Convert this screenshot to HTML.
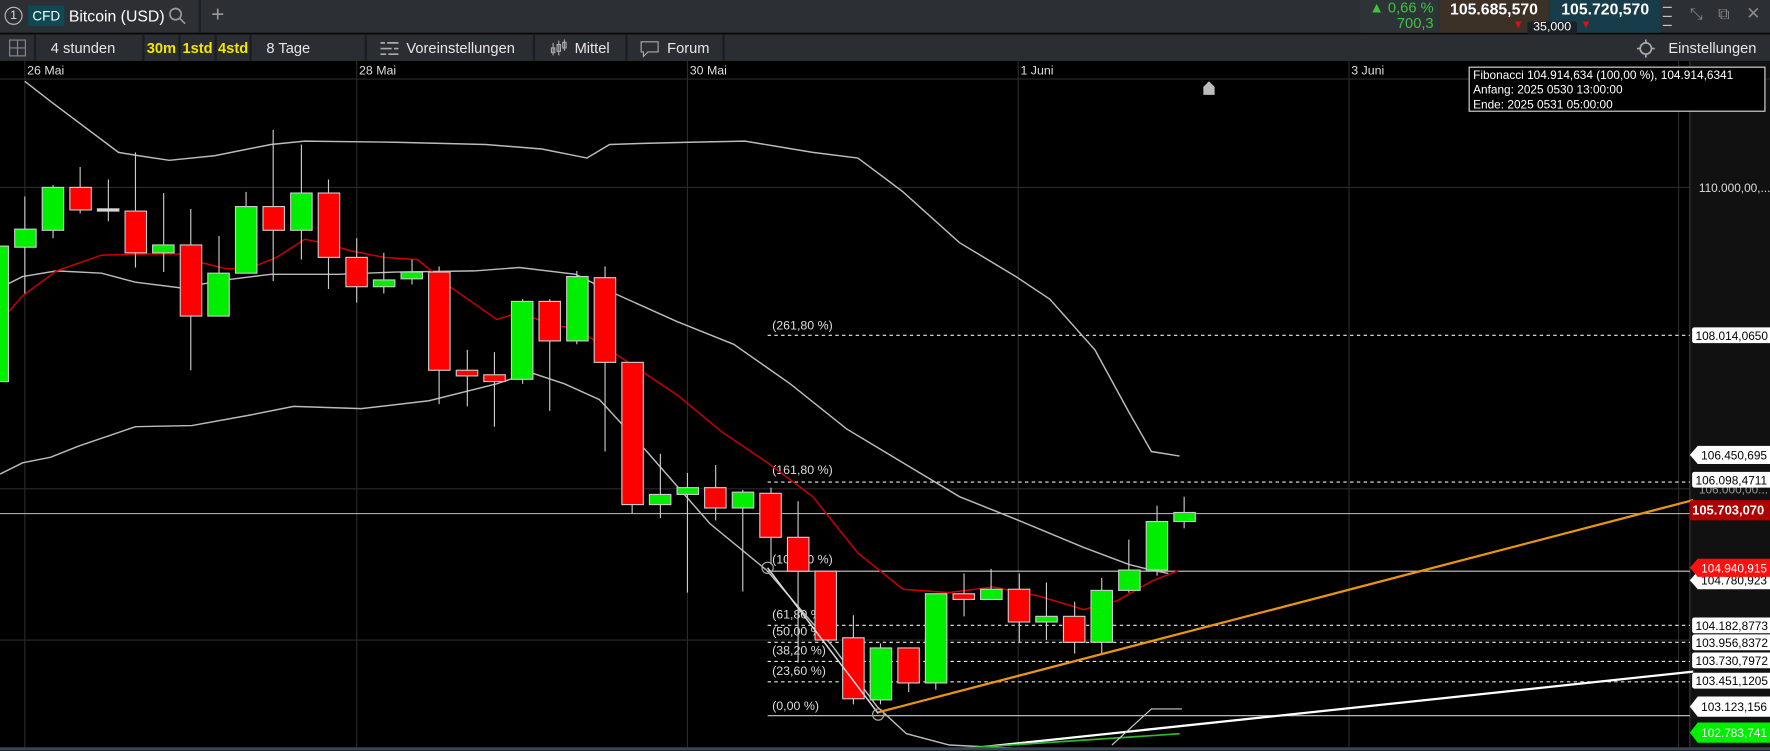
<!DOCTYPE html>
<html><head><meta charset="utf-8"><style>
html,body{margin:0;padding:0;background:#000;overflow:hidden;width:1770px;height:751px}
#w{position:absolute;left:0;top:0;width:1568px;height:665px;transform:scale(1.12883);transform-origin:0 0;font-family:"Liberation Sans",sans-serif;background:#000}
.top{position:absolute;left:0;top:0;width:1568px;height:29px;background:#2c3035}
.tb{position:absolute;left:0;top:30px;width:1568px;height:23px;background:#2a2e33;border-top:1px solid #1a1c1f}
.it{position:absolute;top:0;height:23px;line-height:23px;color:#e6e6e6;font-size:13px;border-right:2px solid #1b1d20;box-sizing:border-box}
.y{color:#f2e600;font-weight:bold;text-align:center}
svg{position:absolute;left:0;top:0}
</style></head><body><div id="w">
<div class="top">
 <div style="position:absolute;left:4px;top:6px;width:14px;height:14px;border:1px solid #bbb;border-radius:50%;color:#ddd;font-size:11px;text-align:center;line-height:14px">1</div>
 <div style="position:absolute;left:25px;top:5px;width:32px;height:18px;background:#0d4a55;color:#fff;font-size:12px;text-align:center;line-height:18px">CFD</div>
 <div style="position:absolute;left:61px;top:5px;color:#fff;font-size:14px;line-height:18px">Bitcoin (USD)</div>
 <svg style="left:149px;top:6px" width="16" height="16"><circle cx="6.5" cy="6.5" r="5" stroke="#999" stroke-width="1.5" fill="none"/><line x1="10" y1="10" x2="15" y2="15" stroke="#999" stroke-width="1.5"/></svg>
 <div style="position:absolute;left:176px;top:0;width:2px;height:29px;background:#1e2023"></div>
 <div style="position:absolute;left:187px;top:2px;color:#999;font-size:20px">+</div>
 <div style="position:absolute;left:1205px;top:0;width:69px;height:29px;background:#2e3337;color:#3ec43e;font-size:13px;text-align:right;line-height:14px;padding-right:4px;box-sizing:border-box">▲ 0,66 %<br>700,3</div>
 <div style="position:absolute;left:1275px;top:0;width:97px;height:29px;background:#3b3126;color:#fff;font-weight:bold;font-size:14px;text-align:center;line-height:16px">105.685,570</div>
 <div style="position:absolute;left:1373px;top:0;width:98px;height:29px;background:#163d49;color:#fff;font-weight:bold;font-size:14px;text-align:center;line-height:16px">105.720,570</div>
 <div style="position:absolute;left:1340px;top:17px;color:#e01010;font-size:10px">▼</div>
 <div style="position:absolute;left:1400px;top:17px;color:#e01010;font-size:10px">▼</div>
 <div style="position:absolute;left:1353px;top:19px;width:44px;height:11px;background:#1b2025;color:#fff;font-size:11px;text-align:center;line-height:11px;border-radius:2px">35,000</div>
 <div style="position:absolute;left:1473px;top:6px;width:8px;height:1px;background:#ccc;box-shadow:0 8px 0 #ccc,0 16px 0 #ccc"></div>
 <div style="position:absolute;left:1497px;top:4px;color:#888;font-size:14px">⤡</div>
 <div style="position:absolute;left:1522px;top:4px;color:#888;font-size:14px">⧉</div>
 <div style="position:absolute;left:1547px;top:3px;color:#888;font-size:15px">✕</div>
</div>
<div class="tb">
 <div class="it" style="left:0;width:32px"><svg style="left:8px;top:4px" width="15" height="15"><rect x="0.5" y="0.5" width="14" height="14" fill="none" stroke="#888"/><line x1="7.5" y1="0" x2="7.5" y2="15" stroke="#888"/><line x1="0" y1="7.5" x2="15" y2="7.5" stroke="#888"/></svg></div>
 <div class="it" style="left:32px;width:96px;padding-left:13px">4 stunden</div>
 <div class="it y" style="left:128px;width:32px">30m</div>
 <div class="it y" style="left:160px;width:32px">1std</div>
 <div class="it y" style="left:192px;width:31px">4std</div>
 <div class="it" style="left:223px;width:102px;padding-left:13px">8 Tage</div>
 <div class="it" style="left:325px;width:149px;padding-left:35px">Voreinstellungen<svg style="left:12px;top:5px" width="16" height="14"><g stroke="#aaa" stroke-width="1.5"><line x1="0" y1="2" x2="16" y2="2"/><line x1="0" y1="7" x2="16" y2="7"/><line x1="0" y1="12" x2="16" y2="12"/></g><g fill="#2a2e33"><rect x="4" y="0" width="2" height="4"/><rect x="10" y="5" width="2" height="4"/><rect x="5" y="10" width="2" height="4"/></g></svg></div>
 <div class="it" style="left:474px;width:82px;padding-left:35px">Mittel<svg style="left:13px;top:4px" width="16" height="15"><g stroke="#aaa" fill="none"><line x1="3" y1="3" x2="3" y2="14"/><rect x="1.5" y="7.5" width="3" height="4"/><line x1="8" y1="1" x2="8" y2="14"/><rect x="6.5" y="4.5" width="3" height="6"/><line x1="13" y1="0" x2="13" y2="10"/><rect x="11.5" y="2.5" width="3" height="5"/></g></svg></div>
 <div class="it" style="left:556px;width:86px;padding-left:35px">Forum<svg style="left:11px;top:5px" width="17" height="15"><path d="M1 1H16V10H7L3 14V10H1Z" fill="none" stroke="#aaa"/></svg></div>
 <div style="position:absolute;right:12px;top:0;line-height:23px;color:#e6e6e6;font-size:13px">Einstellungen</div>
 <svg style="left:1450px;top:4px" width="16" height="16"><circle cx="8" cy="8" r="5" fill="none" stroke="#aaa" stroke-width="1.5"/><g stroke="#aaa" stroke-width="1.5"><line x1="8" y1="0" x2="8" y2="3"/><line x1="8" y1="13" x2="8" y2="16"/><line x1="0" y1="8" x2="3" y2="8"/><line x1="13" y1="8" x2="16" y2="8"/></g></svg>
</div>
<svg width="1568" height="665" style="top:0" font-family="Liberation Sans, sans-serif">
<g transform="translate(0,0)">
<rect x="1497" y="54" width="71" height="611" fill="#111"/>
<line x1="1497" y1="54" x2="1497" y2="665" stroke="#3a3a3a"/>
<g stroke="#2a2a2a" stroke-width="1">
<line x1="22" y1="54" x2="22" y2="662"/><line x1="316" y1="54" x2="316" y2="662"/><line x1="609" y1="54" x2="609" y2="662"/><line x1="902" y1="54" x2="902" y2="662"/><line x1="1195" y1="54" x2="1195" y2="662"/><line x1="1487" y1="54" x2="1487" y2="662"/>
<line x1="0" y1="166" x2="1497" y2="166"/><line x1="0" y1="433" x2="1497" y2="433"/><line x1="0" y1="567" x2="1497" y2="567"/>
<line x1="0" y1="70" x2="1568" y2="70"/>
</g>
<g fill="#ddd" font-size="11"><text x="24" y="66">26 Mai</text><text x="318" y="66">28 Mai</text><text x="611" y="66">30 Mai</text><text x="904" y="66">1 Juni</text><text x="1197" y="66">3 Juni</text></g>
<path d="M1066 84V77L1071 72L1076 77V84Z" fill="#bbb"/>
<!-- fib levels -->
<g stroke="#eee" stroke-width="1" stroke-dasharray="3,3">
<line x1="680" y1="297" x2="1497" y2="297"/><line x1="680" y1="427" x2="1497" y2="427"/><line x1="680" y1="554" x2="1497" y2="554"/><line x1="680" y1="569" x2="1497" y2="569"/><line x1="680" y1="586" x2="1497" y2="586"/><line x1="680" y1="604" x2="1497" y2="604"/>
</g>
<line x1="680" y1="506" x2="1497" y2="506" stroke="#ccc"/>
<line x1="680" y1="634" x2="1497" y2="634" stroke="#ccc"/>
<line x1="0" y1="455" x2="1497" y2="455" stroke="#aaa"/>
<g fill="#ddd" font-size="11"><text x="684" y="292">(261,80 %)</text><text x="684" y="420">(161,80 %)</text><text x="684" y="499">(100,00 %)</text><text x="684" y="548">(61,80 %)</text><text x="684" y="563">(50,00 %)</text><text x="684" y="580">(38,20 %)</text><text x="684" y="598">(23,60 %)</text><text x="684" y="629">(0,00 %)</text></g>
<!-- bands -->
<g fill="none" stroke-width="1.3">
<polyline stroke="#bbb" points="22,72 45,90 105,135 123,138 150,142 190,138 240,128 270,125 350,126 430,128 480,132 520,140 540,128 570,127 610,126 660,125 690,130 720,135 760,140 800,170 850,215 900,245 930,265 970,310 1000,365 1020,400 1045,404"/>
<polyline stroke="#bbb" points="0,420 20,410 45,405 70,395 120,378 170,377 220,368 260,360 320,362 380,355 440,340 470,330 500,340 531,354 566,392 629,464 679,505 738,573 777,626 803,650 841,660 900,663"/>
<polyline stroke="#bbb" points="0,255 20,245 50,240 90,242 120,250 160,255 200,248 240,243 300,243 350,241 420,240 460,237 510,243 540,258 600,285 650,305 700,340 750,380 800,410 850,440 900,460 960,485 1000,500 1020,505 1035,508"/>
<polyline stroke="#c00" points="0,285 20,262 50,240 90,226 130,225 160,225 180,233 200,238 220,238 245,228 270,212 290,216 310,222 340,228 370,230 400,255 440,283 460,277 490,288 510,291 540,310 570,330 600,350 640,383 680,410 720,440 760,490 800,522 840,525 880,520 920,528 960,540 990,532 1020,515 1045,505"/>
</g>
<!-- candles -->
<g stroke="#ccc" stroke-width="1">
<line x1="-2" y1="210" x2="-2" y2="340"/><rect x="-11.5" y="218" width="19" height="120" fill="#00ee00"/>
<line x1="22" y1="174" x2="22" y2="260"/><rect x="13" y="203" width="19" height="16" fill="#00ee00"/>
<line x1="47" y1="164" x2="47" y2="211"/><rect x="37.4" y="166" width="19" height="38" fill="#00ee00"/>
<line x1="71" y1="148" x2="71" y2="189"/><rect x="61.9" y="166" width="19" height="20" fill="#f00"/>
<line x1="96" y1="159" x2="96" y2="196"/><rect x="86.3" y="185" width="19" height="2" fill="#ddd"/>
<line x1="120" y1="135" x2="120" y2="237"/><rect x="110.8" y="187" width="19" height="37" fill="#f00"/>
<line x1="145" y1="171" x2="145" y2="241"/><rect x="135.2" y="217" width="19" height="7" fill="#00ee00"/>
<line x1="169" y1="185" x2="169" y2="328"/><rect x="159.7" y="217" width="19" height="63" fill="#f00"/>
<line x1="194" y1="209" x2="194" y2="280"/><rect x="184.1" y="242" width="19" height="38" fill="#00ee00"/>
<line x1="218" y1="170" x2="218" y2="242"/><rect x="208.6" y="183" width="19" height="59" fill="#00ee00"/>
<line x1="242" y1="115" x2="242" y2="249"/><rect x="233" y="183" width="19" height="21" fill="#f00"/>
<line x1="267" y1="128" x2="267" y2="230"/><rect x="257.5" y="171" width="19" height="33" fill="#00ee00"/>
<line x1="291" y1="159" x2="291" y2="256"/><rect x="281.9" y="171" width="19" height="57" fill="#f00"/>
<line x1="316" y1="211" x2="316" y2="268"/><rect x="306.4" y="228" width="19" height="26" fill="#f00"/>
<line x1="340" y1="224" x2="340" y2="260"/><rect x="330.8" y="248" width="19" height="6" fill="#00ee00"/>
<line x1="365" y1="230" x2="365" y2="252"/><rect x="355.3" y="241" width="19" height="6" fill="#00ee00"/>
<line x1="389" y1="236" x2="389" y2="358"/><rect x="379.7" y="241" width="19" height="87" fill="#f00"/>
<line x1="414" y1="310" x2="414" y2="360"/><rect x="404.2" y="328" width="19" height="5" fill="#f00"/>
<line x1="438" y1="312" x2="438" y2="378"/><rect x="428.6" y="332" width="19" height="6" fill="#f00"/>
<line x1="463" y1="265" x2="463" y2="340"/><rect x="453.1" y="267" width="19" height="69" fill="#00ee00"/>
<line x1="487" y1="265" x2="487" y2="364"/><rect x="477.5" y="267" width="19" height="35" fill="#f00"/>
<line x1="511" y1="240" x2="511" y2="305"/><rect x="502" y="245" width="19" height="57" fill="#00ee00"/>
<line x1="536" y1="236" x2="536" y2="400"/><rect x="526.4" y="246" width="19" height="75" fill="#f00"/>
<line x1="560" y1="321" x2="560" y2="455"/><rect x="550.9" y="321" width="19" height="126" fill="#f00"/>
<line x1="585" y1="402" x2="585" y2="459"/><rect x="575.3" y="438" width="19" height="9" fill="#00ee00"/>
<line x1="609" y1="419" x2="609" y2="525"/><rect x="599.8" y="432" width="19" height="6" fill="#00ee00"/>
<line x1="634" y1="412" x2="634" y2="461"/><rect x="624.2" y="432" width="19" height="18" fill="#f00"/>
<line x1="658" y1="434" x2="658" y2="524"/><rect x="648.7" y="436" width="19" height="14" fill="#00ee00"/>
<line x1="683" y1="432" x2="683" y2="500"/><rect x="673.1" y="437" width="19" height="39" fill="#f00"/>
<line x1="707" y1="444" x2="707" y2="587"/><rect x="697.6" y="476" width="19" height="30" fill="#f00"/>
<line x1="731" y1="506" x2="731" y2="567"/><rect x="722" y="506" width="19" height="61" fill="#f00"/>
<line x1="756" y1="545" x2="756" y2="624"/><rect x="746.5" y="565" width="19" height="54" fill="#f00"/>
<line x1="780" y1="570" x2="780" y2="624"/><rect x="770.9" y="574" width="19" height="46" fill="#00ee00"/>
<line x1="805" y1="574" x2="805" y2="613"/><rect x="795.4" y="574" width="19" height="31" fill="#f00"/>
<line x1="829" y1="526" x2="829" y2="611"/><rect x="819.8" y="526" width="19" height="79" fill="#00ee00"/>
<line x1="854" y1="508" x2="854" y2="546"/><rect x="844.3" y="526" width="19" height="5" fill="#f00"/>
<line x1="878" y1="504" x2="878" y2="531"/><rect x="868.7" y="522" width="19" height="9" fill="#00ee00"/>
<line x1="903" y1="508" x2="903" y2="569"/><rect x="893.2" y="522" width="19" height="29" fill="#f00"/>
<line x1="927" y1="516" x2="927" y2="567"/><rect x="917.6" y="546" width="19" height="5" fill="#00ee00"/>
<line x1="952" y1="533" x2="952" y2="579"/><rect x="942.1" y="546" width="19" height="23" fill="#f00"/>
<line x1="976" y1="512" x2="976" y2="580"/><rect x="966.5" y="523" width="19" height="46" fill="#00ee00"/>
<line x1="1000" y1="478" x2="1000" y2="525"/><rect x="991" y="505" width="19" height="18" fill="#00ee00"/>
<line x1="1025" y1="448" x2="1025" y2="510"/><rect x="1015.4" y="462" width="19" height="43" fill="#00ee00"/>
<line x1="1049" y1="440" x2="1049" y2="468"/><rect x="1039.9" y="454" width="19" height="8" fill="#00ee00"/>
</g>
<!-- drawings -->
<line x1="680" y1="503" x2="778" y2="632" stroke="#ddd" stroke-width="1.3"/>
<circle cx="680" cy="503" r="5" fill="none" stroke="#aaa"/><circle cx="778" cy="633" r="5" fill="none" stroke="#aaa"/>
<line x1="778" y1="631" x2="1500" y2="443" stroke="#e8960e" stroke-width="2"/>
<line x1="850" y1="664" x2="1500" y2="595" stroke="#fff" stroke-width="2"/>
<line x1="850" y1="663" x2="1045" y2="650" stroke="#2db82d" stroke-width="1.5"/>
<polyline points="985,660 1020,628 1047,628" fill="none" stroke="#ccc"/>
<!-- tooltip -->
<rect x="1301.5" y="59.5" width="262" height="39" fill="#000" stroke="#ddd"/>
<g fill="#fff" font-size="10.5"><text x="1305" y="70">Fibonacci 104.914,634 (100,00 %), 104.914,6341</text><text x="1305" y="83">Anfang: 2025 0530 13:00:00</text><text x="1305" y="96">Ende: 2025 0531 05:00:00</text></g>
<!-- axis labels -->
<g font-size="10.5">
<text x="1505" y="170" fill="#ddd">110.000,00,...</text>
<rect x="1499" y="290" width="72" height="14" rx="2" fill="#fff"/><text x="1502" y="301" fill="#000">108.014,0650</text>
<path d="M1497 403L1504 395H1570V411H1504Z" fill="#fff"/><text x="1507" y="407" fill="#000">106.450,695</text>
<text x="1505" y="437" fill="#999">106.000,00...</text>
<rect x="1499" y="418" width="72" height="14" rx="2" fill="#fff"/><text x="1502" y="429" fill="#000">106.098,4711</text>
<rect x="1497" y="443" width="75" height="18" rx="2" fill="#b00000"/><text x="1499" y="456" fill="#fff" font-weight="bold" font-size="11.5">105.703,070</text>
<path d="M1497 514L1504 506H1570V522H1504Z" fill="#fff"/><text x="1507" y="518" fill="#000">104.780,923</text>
<path d="M1497 503L1504 495H1570V511H1504Z" fill="#ff1010"/><text x="1507" y="507" fill="#fff">104.940,915</text>
<rect x="1499" y="547" width="72" height="14" rx="2" fill="#fff"/><text x="1502" y="558" fill="#000">104.182,8773</text>
<rect x="1499" y="562" width="72" height="14" rx="2" fill="#fff"/><text x="1502" y="573" fill="#000">103.956,8372</text>
<rect x="1499" y="578" width="72" height="14" rx="2" fill="#fff"/><text x="1502" y="589" fill="#000">103.730,7972</text>
<rect x="1499" y="596" width="72" height="14" rx="2" fill="#fff"/><text x="1502" y="607" fill="#000">103.451,1205</text>
<path d="M1497 626L1504 617H1570V635H1504Z" fill="#fff"/><text x="1507" y="630" fill="#000">103.123,156</text>
<path d="M1497 649L1504 640H1570V658H1504Z" fill="#00ee00"/><text x="1507" y="653" fill="#fff">102.783,741</text>
</g>
<rect x="0" y="662" width="1568" height="3" fill="#3a4552"/>
</g>
</svg>
</div></body></html>
